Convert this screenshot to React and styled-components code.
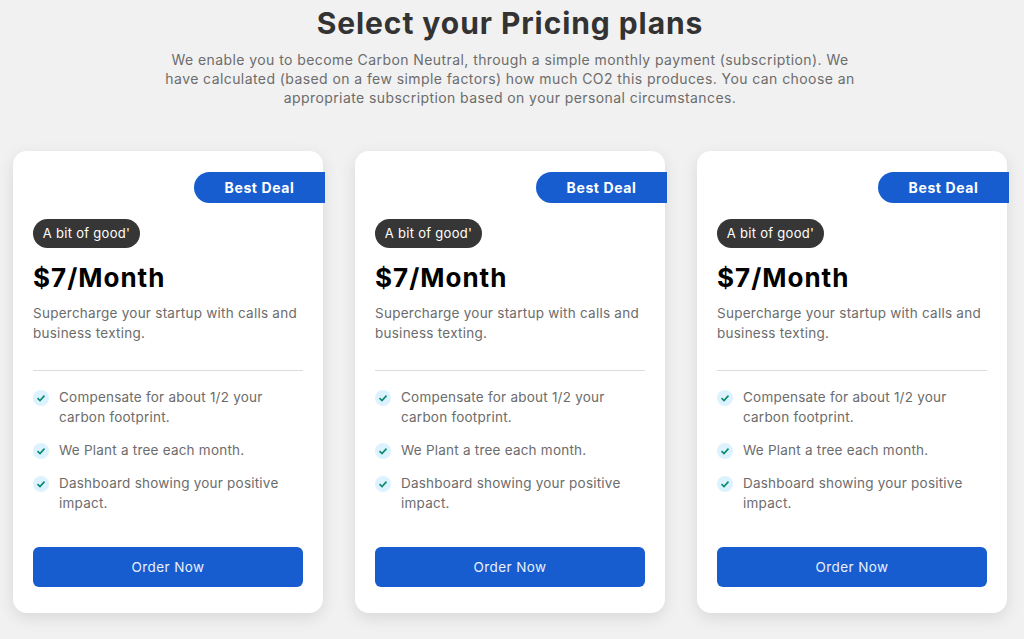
import React from 'react'
import styled, { createGlobalStyle } from 'styled-components'

const GlobalStyle = createGlobalStyle`
  html, body {
    margin: 0;
    padding: 0;
    background: #f1f1f1;
  }
  * {
    box-sizing: border-box;
  }
  body {
    font-family: Inter, "Open Sans", "Liberation Sans", sans-serif;
  }
`

const Page = styled.div`
  width: 1024px;
  height: 639px;
  overflow: hidden;
  padding: 5px 17px 0 13px;
`

const Header = styled.header`
  display: flex;
  flex-direction: column;
  align-items: center;
  margin-bottom: 43px;
`

const Title = styled.h1`
  margin: 0 0 9px;
  font-size: 30px;
  line-height: 36px;
  font-weight: 700;
  letter-spacing: 0.92px;
  color: #333333;
`

const Intro = styled.p`
  margin: 0;
  width: 700px;
  font-size: 14px;
  line-height: 19.2px;
  font-weight: 400;
  letter-spacing: 0.42px;
  text-align: center;
  color: #6c6c6c;
`

const Cards = styled.div`
  display: grid;
  grid-template-columns: repeat(3, 310px);
  column-gap: 32px;
`

const Card = styled.article`
  position: relative;
  height: 462px;
  padding: 68px 20px 26px;
  display: flex;
  flex-direction: column;
  background: #ffffff;
  border-radius: 14px;
  box-shadow: 0 5px 16px rgba(0, 0, 0, 0.1);
`

const DealBadge = styled.div`
  position: absolute;
  top: 21px;
  right: -2px;
  width: 131px;
  height: 31px;
  display: flex;
  align-items: center;
  justify-content: center;
  background: #175dd0;
  border-radius: 16px 0 0 16px;
  font-size: 14px;
  font-weight: 700;
  letter-spacing: 0.6px;
  color: #ffffff;
`

const PlanTag = styled.span`
  align-self: flex-start;
  height: 29px;
  width: 107px;
  display: flex;
  align-items: center;
  justify-content: center;
  background: #363636;
  border-radius: 15px;
  font-size: 13px;
  letter-spacing: 0.3px;
  white-space: nowrap;
  color: #ffffff;
`

const Price = styled.h2`
  margin: 14px 0 0;
  font-size: 26px;
  line-height: 32px;
  font-weight: 700;
  letter-spacing: 1px;
  color: #000000;
`

const Description = styled.p`
  margin: 9px 0 0;
  font-size: 13.5px;
  line-height: 20px;
  letter-spacing: 0.25px;
  color: #6c6c6c;
`

const Divider = styled.hr`
  width: 100%;
  margin: 27px 0 16px;
  border: 0;
  border-top: 1px solid #dcdcdc;
`

const Features = styled.ul`
  list-style: none;
  margin: 0;
  padding: 0;
  display: flex;
  flex-direction: column;
  gap: 13px;
`

const Feature = styled.li`
  display: flex;
  gap: 10px;
  font-size: 13.5px;
  line-height: 20px;
  letter-spacing: 0.22px;
  color: #6c6c6c;
`

const CheckMark = styled.span`
  flex: 0 0 16px;
  width: 16px;
  height: 16px;
  margin-top: 3px;
  display: flex;
  align-items: center;
  justify-content: center;
  background: #dcf2fe;
  border-radius: 50%;
`

const OrderButton = styled.button`
  margin-top: auto;
  width: 100%;
  height: 40px;
  border: 0;
  border-radius: 6px;
  background: #175dd0;
  font-family: inherit;
  font-size: 13.5px;
  letter-spacing: 0.4px;
  color: #e8f0fc;
`

const features = [
  'Compensate for about 1/2 your carbon footprint.',
  'We Plant a tree each month.',
  'Dashboard showing your positive impact.',
]

const CheckIcon = () => (
  <svg width="10" height="10" viewBox="0 0 10 10" fill="none">
    <path d="M1.5 5.2 L4 7.6 L8.5 2.6" stroke="#0a8a70" strokeWidth="1.6" />
  </svg>
)

const PlanCard = () => (
  <Card>
    <DealBadge>Best Deal</DealBadge>
    <PlanTag>A bit of good'</PlanTag>
    <Price>$7/Month</Price>
    <Description>Supercharge your startup with calls and business texting.</Description>
    <Divider />
    <Features>
      {features.map((text) => (
        <Feature key={text}>
          <CheckMark><CheckIcon /></CheckMark>
          <span>{text}</span>
        </Feature>
      ))}
    </Features>
    <OrderButton>Order Now</OrderButton>
  </Card>
)

const App = () => (
  <Page>
    <GlobalStyle />
    <Header>
      <Title>Select your Pricing plans</Title>
      <Intro>
        We enable you to become Carbon Neutral, through a simple monthly payment (subscription). We
        have calculated (based on a few simple factors) how much CO2 this produces. You can choose an
        appropriate subscription based on your personal circumstances.
      </Intro>
    </Header>
    <Cards>
      <PlanCard />
      <PlanCard />
      <PlanCard />
    </Cards>
  </Page>
)

export default App
